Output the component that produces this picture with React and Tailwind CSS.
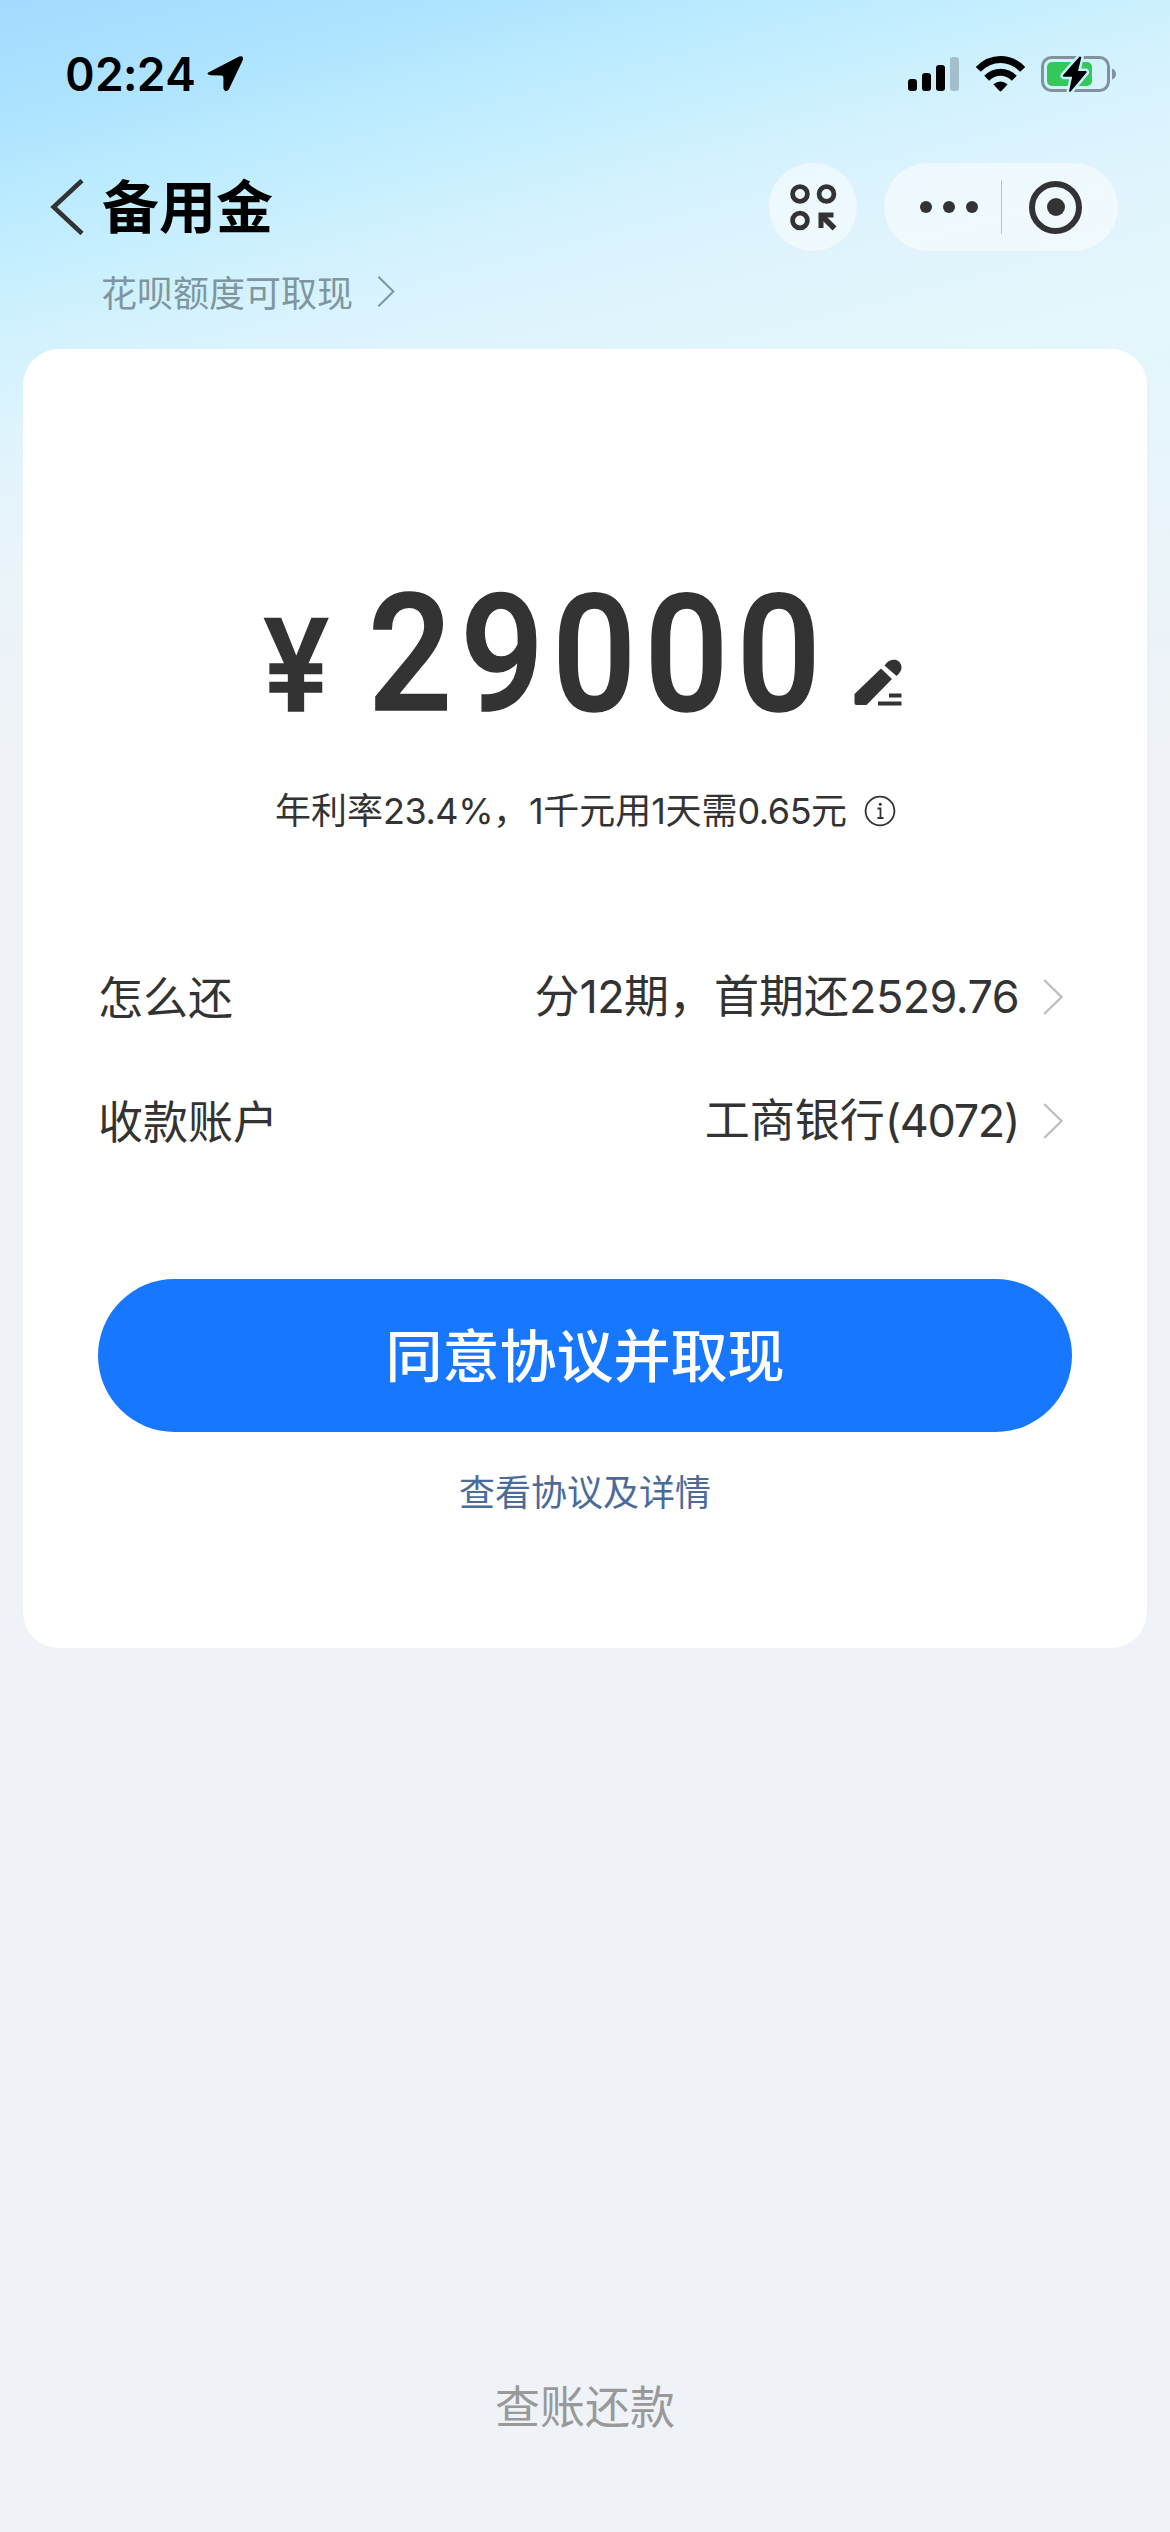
function Chevron({ className }) {
  return (
    <svg className={className} viewBox="0 0 20 36" fill="none" stroke="currentColor">
      <path d="M1.2 1 L18.5 18 L1.2 35" strokeWidth="2.4" />
    </svg>
  );
}

function Num({ children }) {
  return <span className="font-['Inter'] tracking-[-0.013em]">{children}</span>;
}

function StatusBar() {
  return (
    <div className="flex h-[148px] items-center pl-[65px] pr-[53px] text-black">
      <span className="w-[130px] whitespace-nowrap font-['Inter'] text-[46px] font-semibold leading-none tabular-nums tracking-[-0.2px]">
        02:24
      </span>
      <svg className="ml-[12px] h-[36px] w-[37px]" viewBox="0 0 37 36">
        <path
          d="M1.8 16.2 L32.2 0.6 Q37.4 -0.8 35.6 4.4 L21.8 33.4 Q18.2 37.4 16.4 32.6 V21.6 Q16.4 19.4 14.2 19.4 L3.6 19.2 Q-1.6 18.4 1.8 16.2 Z"
          fill="#000"
        />
      </svg>
      <svg className="ml-auto h-[36px] w-[52px]" viewBox="0 0 52 36">
        <rect x="0" y="23" width="9" height="12" rx="3" />
        <rect x="14" y="17" width="9" height="18" rx="3" />
        <rect x="28" y="9" width="9" height="26" rx="3" />
        <rect x="42" y="1" width="9" height="34" rx="3" fill="#a4bfca" />
      </svg>
      <svg className="ml-[16px] h-[36px] w-[49px]" viewBox="0 0 49 36" fill="none">
        <path d="M2.3 13.4 C15 0.2 34 0.2 46.7 13.4" stroke="#000" strokeWidth="7" />
        <path d="M10.7 22.2 C18.8 14.2 30.2 14.2 38.3 22.2" stroke="#000" strokeWidth="7" />
        <path d="M17.4 28.2 Q24.5 22.6 31.6 28.2 L26 34.6 Q24.5 36.2 23 34.6 Z" fill="#000" />
      </svg>
      <svg className="ml-[16px] h-[38px] w-[76px]" viewBox="0 0 76 38">
        <rect x="1.5" y="2.5" width="66" height="33" rx="9" fill="none" stroke="#80929b" strokeWidth="3" />
        <rect x="6" y="7" width="45" height="24" rx="5" fill="#34c759" />
        <path d="M71 13.5 Q75 15 75 19 Q75 23 71 24.5 Z" fill="#80929b" />
        <path
          d="M38.6 1.4 L22 20.2 Q21.4 21.6 23 21.8 L31.2 21.8 L28 36.4 L29.4 36.8 L45.6 17.6 Q46 16.2 44.6 16 L37 16 L40.4 2 Z"
          fill="#000"
          stroke="#c8effd"
          strokeWidth="5"
          strokeLinejoin="round"
          paintOrder="stroke"
        />
      </svg>
    </div>
  );
}

function NavBar() {
  return (
    <div className="flex h-[118px] items-center pl-[50px] pr-[51px]">
      <svg className="h-[56px] w-[34px]" viewBox="0 0 34 56" fill="none">
        <path d="M32 1.5 L3.6 28 L32 54.5" stroke="#333" strokeWidth="4.6" />
      </svg>
      <h1 className="ml-[18px] pb-[7px] text-[57px] font-bold leading-none text-black">备用金</h1>
      <div className="ml-auto flex h-[90px] w-[90px] items-center justify-center rounded-full border border-[#e6f0f8] bg-white/50">
        <svg className="h-[47px] w-[47px]" viewBox="0 0 47 47" fill="none" stroke="#333">
          <circle cx="10" cy="10" r="7.4" strokeWidth="4.8" />
          <circle cx="36.5" cy="10" r="7.4" strokeWidth="4.8" />
          <circle cx="10" cy="36.5" r="7.4" strokeWidth="4.8" />
          <path d="M31 44 V31 H43.5" strokeWidth="5" />
          <path d="M31.5 31.5 L44.5 44.5" strokeWidth="5.6" />
        </svg>
      </div>
      <div className="ml-[25px] flex h-[90px] w-[236px] items-center rounded-full border border-[#e6f0f8] bg-white/50">
        <div className="ml-[36px] flex gap-[11px]">
          <i className="h-[12px] w-[12px] rounded-full bg-[#333]" />
          <i className="h-[12px] w-[12px] rounded-full bg-[#333]" />
          <i className="h-[12px] w-[12px] rounded-full bg-[#333]" />
        </div>
        <div className="ml-[23px] h-[54px] w-px bg-[#b9c6ce]" />
        <div className="ml-[27px] flex h-[53px] w-[53px] items-center justify-center rounded-full border-[6px] border-[#333]">
          <i className="h-[18px] w-[18px] rounded-full bg-[#333]" />
        </div>
      </div>
    </div>
  );
}

function Row({ label, children }) {
  return (
    <div className="flex h-[124px] items-center pl-[75px] pr-[84px] text-[45px] leading-[60px] text-[#333]">
      <span className="pb-[3px]">{label}</span>
      <span className="ml-auto pb-[4px]">{children}</span>
      <Chevron className="ml-[24px] h-[36px] w-[20px] text-[#bfbfbf]" />
    </div>
  );
}

export default function App() {
  return (
    <div className="h-[2532px] w-[1170px] overflow-hidden bg-[#eff3f8] font-['Noto_Sans_CJK_SC',sans-serif] bg-[linear-gradient(180deg,transparent_400px,#edf3f8_670px,#eff3f8_740px),linear-gradient(165.4deg,#a3dbff_0px,#ade3ff_110px,#bbebff_200px,#cbf0fe_290px,#d9f3fe_380px,#e0f4fd_470px,#e4f7fb_580px,#e6f6fc_700px)]">
      <div className="flex h-full flex-col">
        <StatusBar />
        <NavBar />
        <div className="flex h-[54px] items-center pl-[101px] text-[#7f969f]">
          <span className="pb-[4px] text-[36px] leading-none">花呗额度可取现</span>
          <Chevron className="mb-[3px] ml-[24px] h-[31px] w-[18px]" />
        </div>

        <main className="mx-[23px] mt-[29px] flex h-[1299px] flex-col rounded-[36px] bg-white">
          <div className="mt-[225px] flex h-[160px] items-end pl-[241px] font-['Roboto'] font-medium text-[#333] [-webkit-text-stroke:1.6px_#333]">
            <span className="w-[68px] text-[129px] leading-[135px]">
              <span className="inline-block origin-left scale-x-[0.94]">¥</span>
            </span>
            <span className="ml-[36px] w-[460px] text-[164px] leading-[160px]">
              <span className="inline-block origin-left scale-x-[0.9] tracking-[9.2px]">29000</span>
            </span>
            <svg className="mb-[27px] ml-[26px] h-[48px] w-[48px]" viewBox="0 0 48 48" fill="#333">
              <path d="M0.5 35 L27 9.5 L38 20 L13 45.5 Q12.5 46 11.5 46 H2.5 Q0.5 46 0.5 44 Z" />
              <path d="M30.5 6.5 Q35 -0.2 41.5 0.8 Q47.2 2.4 47.5 8.5 Q47.5 12.5 42.5 17 Z" />
              <path d="M35 34.5 H47.5 V38.5 H35 Z M24 42.5 H47.5 V46.5 H24 Z" />
            </svg>
          </div>

          <div className="mt-[45px] flex h-[60px] items-center pl-[252px] text-[36px] leading-[60px] text-[#333]">
            <span>
              年利率<Num>23.4%</Num>，<Num>1</Num>千元用<Num>1</Num>天需<Num>0.65</Num>元
            </span>
            <svg className="ml-[17px] mt-[4px] h-[32px] w-[32px]" viewBox="0 0 32 32" fill="none" stroke="#333">
              <circle cx="16" cy="16" r="14.4" strokeWidth="1.8" />
              <path d="M13.5 13.5 H16.5 V22.8 M13.5 23 H19.5" strokeWidth="1.8" />
              <circle cx="16.3" cy="9.2" r="1.5" fill="#333" stroke="none" />
            </svg>
          </div>

          <div className="mt-[96px]">
            <Row label="怎么还">
              分<Num>12</Num>期，首期还<Num>2529.76</Num>
            </Row>
            <Row label="收款账户">
              工商银行<span className="font-['Inter'] tracking-[-0.03em]">(4072)</span>
            </Row>
          </div>

          <button className="mx-[75px] mt-[96px] h-[153px] shrink-0 rounded-full bg-[#1777ff] pb-[6px] text-[57px] font-medium leading-none text-white">
            同意协议并取现
          </button>
          <a className="mt-[28px] text-center text-[36px] leading-[60px] text-[#4b6b99]">查看协议及详情</a>
        </main>

        <footer className="mt-auto pb-[97px] text-center text-[45px] leading-[60px] text-[#999]">查账还款</footer>
      </div>
    </div>
  );
}
